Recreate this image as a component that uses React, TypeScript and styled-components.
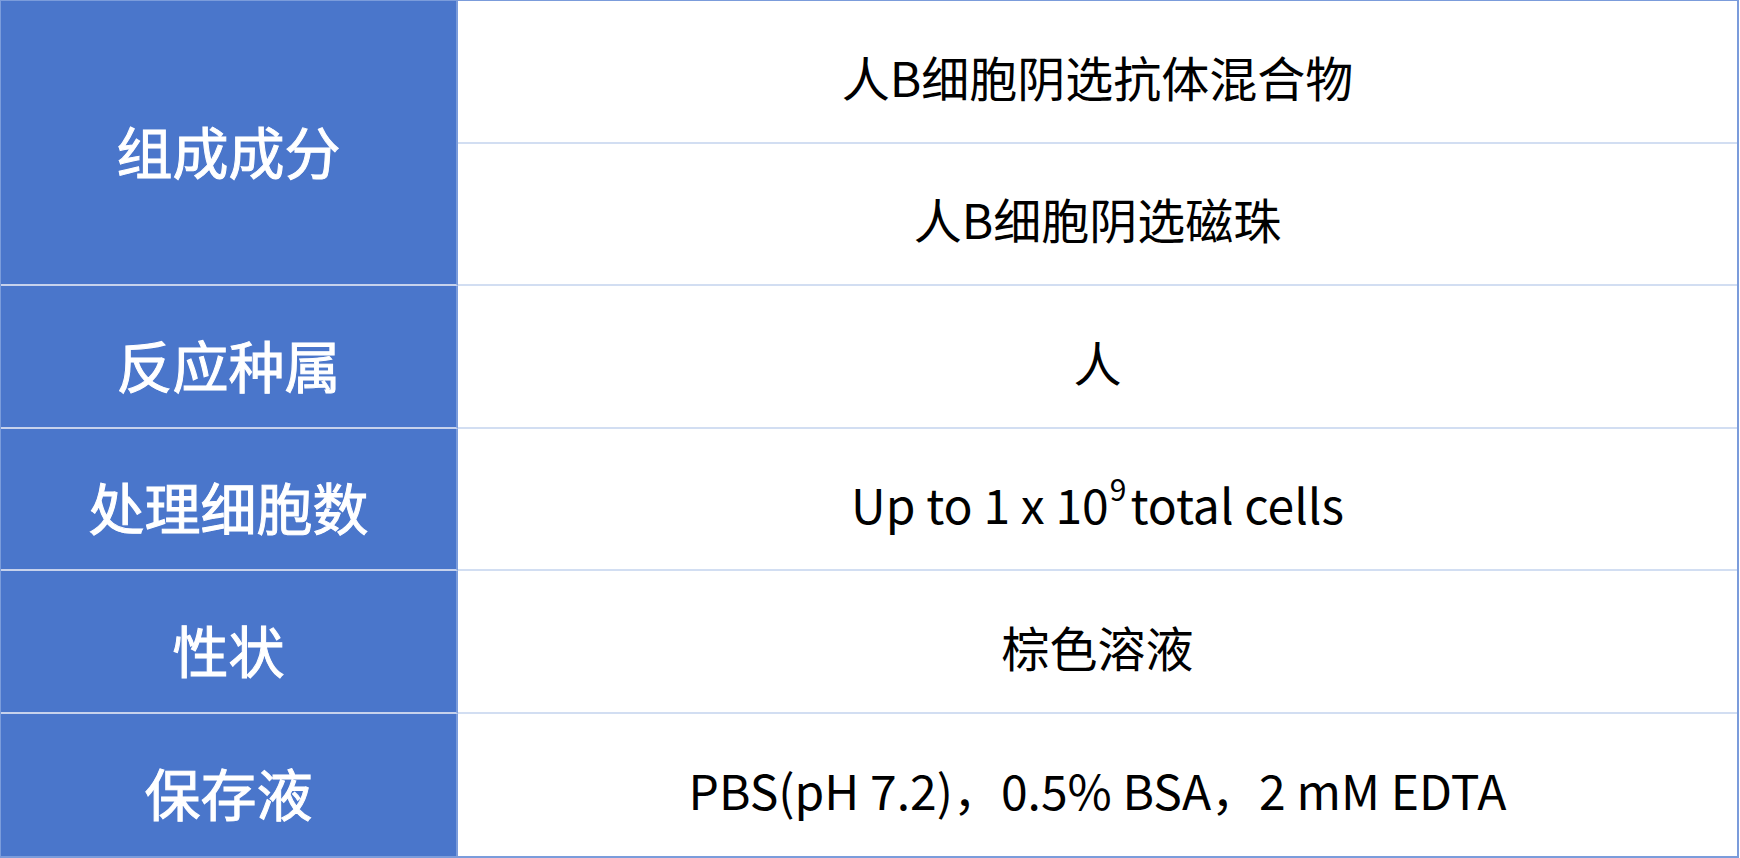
import styled, { createGlobalStyle } from 'styled-components'

const GlobalStyle = createGlobalStyle`
  html,
  body {
    margin: 0;
    padding: 0;
    background: #fff;
  }

  body {
    font-family: 'Noto Sans CJK SC', 'Noto Sans', sans-serif;
  }
`

const Table = styled.div`
  display: grid;
  grid-template-columns: 457px 1fr;
  grid-template-rows: repeat(6, 1fr);
  box-sizing: border-box;
  width: 1739px;
  height: 858px;
  border: 2px solid #7b9cdb;
  border-top-width: 1px;
  border-left-width: 1px;
`

const Label = styled.div<{ $span?: number; $last?: boolean }>`
  grid-row: span ${({ $span }) => $span || 1};
  display: flex;
  align-items: center;
  justify-content: center;
  padding-top: 14px;
  background: #4a76cb;
  color: #fff;
  font-size: 56px;
  font-weight: 400;
  -webkit-text-stroke: 1px #fff;
  border-right: 2px solid #7b9cdb;
  border-bottom: ${({ $last }) => ($last ? 'none' : '2px solid #c7d2ec')};
`

const Value = styled.div<{ $last?: boolean }>`
  display: flex;
  align-items: center;
  justify-content: center;
  padding-top: 9px;
  color: #000;
  font-size: 48px;
  border-bottom: ${({ $last }) => ($last ? 'none' : '2px solid #d2def2')};
`

const Sup = styled.span`
  position: relative;
  top: -15px;
  font-size: 30px;
  margin: 0 4px 0 1px;
`

function App() {
  return (
    <>
      <GlobalStyle />
      <Table>
        <Label $span={2}>组成成分</Label>
        <Value>人B细胞阴选抗体混合物</Value>
        <Value>人B细胞阴选磁珠</Value>
        <Label>反应种属</Label>
        <Value>人</Value>
        <Label>处理细胞数</Label>
        <Value>
          Up to 1 x 10<Sup>9</Sup>total cells
        </Value>
        <Label>性状</Label>
        <Value>棕色溶液</Value>
        <Label $last>保存液</Label>
        <Value $last>PBS(pH 7.2)，0.5% BSA，2 mM EDTA</Value>
      </Table>
    </>
  )
}

export default App
